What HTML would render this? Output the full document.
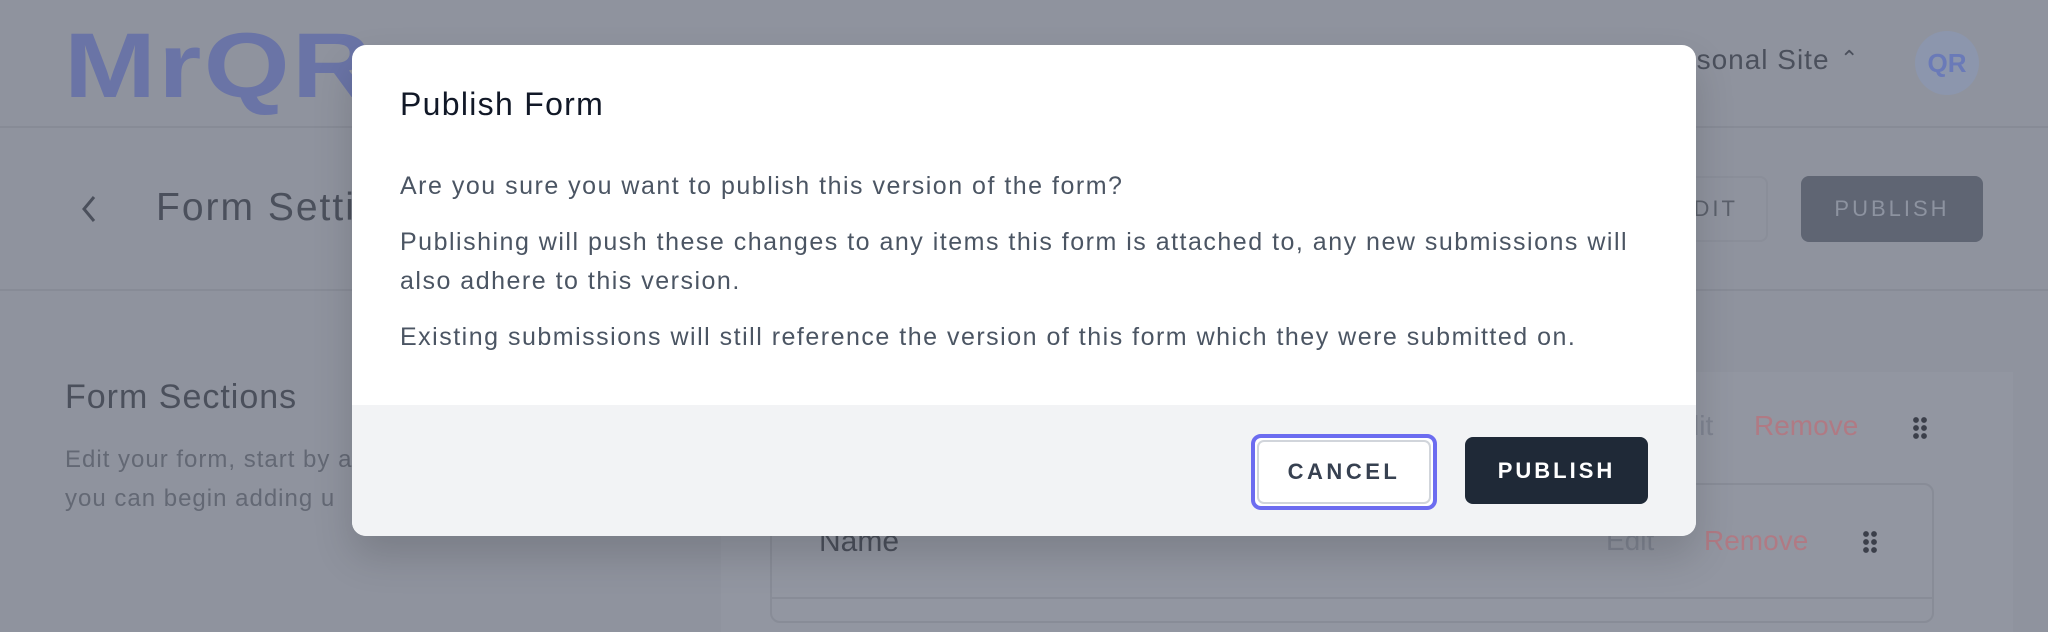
<!DOCTYPE html>
<html><head><meta charset="utf-8"><style>
*{box-sizing:border-box;margin:0;padding:0}
body{width:2048px;height:615px;overflow:hidden;background:#8f939e;font-family:"Liberation Sans",sans-serif;position:relative}
.a{position:absolute;white-space:nowrap}
.dots{position:absolute;width:16px;height:24px;background:radial-gradient(circle,#3b3f4a 2.6px,transparent 3.1px) 0 0/8px 8px}
</style></head><body>
<div class="a" style="left:0;top:126px;width:2048px;height:2px;background:#878b96"></div>
<div class="a" style="left:0;top:289px;width:2048px;height:2px;background:#878b96"></div>
<div class="a" style="left:64px;top:20px;font-size:92px;font-weight:bold;color:#6a74a6;letter-spacing:2px;line-height:92px;transform:scaleX(1.2);transform-origin:left">MrQR</div>
<div class="a" style="left:1650px;top:44px;font-size:28px;color:#4b505c;letter-spacing:1px">Personal Site</div>
<div class="a" style="left:1840px;top:46px;font-size:22px;color:#4b505c">⌃</div>
<div class="a" style="left:1915px;top:31px;width:64px;height:64px;border-radius:50%;background:#8c96ad;color:#6a7ab8;font-size:26px;font-weight:bold;text-align:center;line-height:64px">QR</div>
<svg class="a" style="left:78px;top:194px" width="22" height="30"><path d="M16 3 L6 15 L16 27" fill="none" stroke="#4b505c" stroke-width="3"/></svg>
<div class="a" style="left:156px;top:186px;font-size:39px;color:#4b505c;letter-spacing:2px">Form Settings</div>
<div class="a" style="left:1660px;top:176px;width:108px;height:66px;border:2px solid #8a8e99;border-radius:8px;font-size:22px;letter-spacing:3px;color:#5b606b;line-height:62px;text-align:right;padding-right:28px">EDIT</div>
<div class="a" style="left:1801px;top:176px;width:182px;height:66px;background:#5f6573;border-radius:8px;font-size:22px;letter-spacing:3px;color:#8d93a0;line-height:66px;text-align:center">PUBLISH</div>
<div class="a" style="left:65px;top:378px;font-size:34px;color:#4b505c;letter-spacing:1px">Form Sections</div>
<div class="a" style="left:65px;top:440px;font-size:24px;color:#636874;line-height:39px;letter-spacing:1px">Edit your form, start by adding a section<br>you can begin adding u</div>
<div class="a" style="left:721px;top:372px;width:1292px;height:260px;background:#9296a1"></div>
<div class="a" style="left:770px;top:483px;width:1164px;height:140px;border:2px solid #888c97;border-radius:10px"></div>
<div class="a" style="left:770px;top:597px;width:1164px;height:2px;background:#888c97"></div>
<div class="a" style="left:1665px;top:410px;font-size:28px;color:#7e8390">Edit</div>
<div class="a" style="left:1754px;top:410px;font-size:28px;color:#b07a84">Remove</div>
<div class="dots" style="left:1912px;top:416px"></div>
<div class="a" style="left:819px;top:525px;font-size:30px;color:#4b505c">Name</div>
<div class="a" style="left:1606px;top:525px;font-size:28px;color:#7e8390">Edit</div>
<div class="a" style="left:1704px;top:525px;font-size:28px;color:#b07a84">Remove</div>
<div class="dots" style="left:1862px;top:530px"></div>

<div class="a" style="left:352px;top:45px;width:1344px;height:491px;background:#fff;border-radius:14px;overflow:hidden;box-shadow:0 20px 40px rgba(0,0,0,.15)">
<div class="a" style="left:48px;top:41px;font-size:32px;color:#111827;letter-spacing:1.3px">Publish Form</div>
<div class="a" style="left:48px;top:122px;font-size:25px;color:#4b5563;line-height:39px;white-space:normal;width:1260px;letter-spacing:1.5px">
<p style="margin-bottom:17px">Are you sure you want to publish this version of the form?</p>
<p style="margin-bottom:17px">Publishing will push these changes to any items this form is attached to, any new submissions will also adhere to this version.</p>
<p>Existing submissions will still reference the version of this form which they were submitted on.</p></div>
<div class="a" style="left:0;top:360px;width:1344px;height:131px;background:#f2f3f5"></div>
<div class="a" style="left:899px;top:389px;width:186px;height:76px;border:4px solid #6c6cf0;border-radius:10px;background:#fff"><div style="position:absolute;left:2px;top:2px;right:2px;bottom:2px;border:2px solid #d1d5db;border-radius:7px;text-align:center;line-height:60px;font-size:22px;letter-spacing:3.5px;color:#374151;font-weight:bold">CANCEL</div></div>
<div class="a" style="left:1113px;top:392px;width:183px;height:67px;background:#1f2937;border-radius:8px;text-align:center;line-height:67px;font-size:22px;letter-spacing:3px;color:#fff;font-weight:bold">PUBLISH</div>
</div>
</body></html>
